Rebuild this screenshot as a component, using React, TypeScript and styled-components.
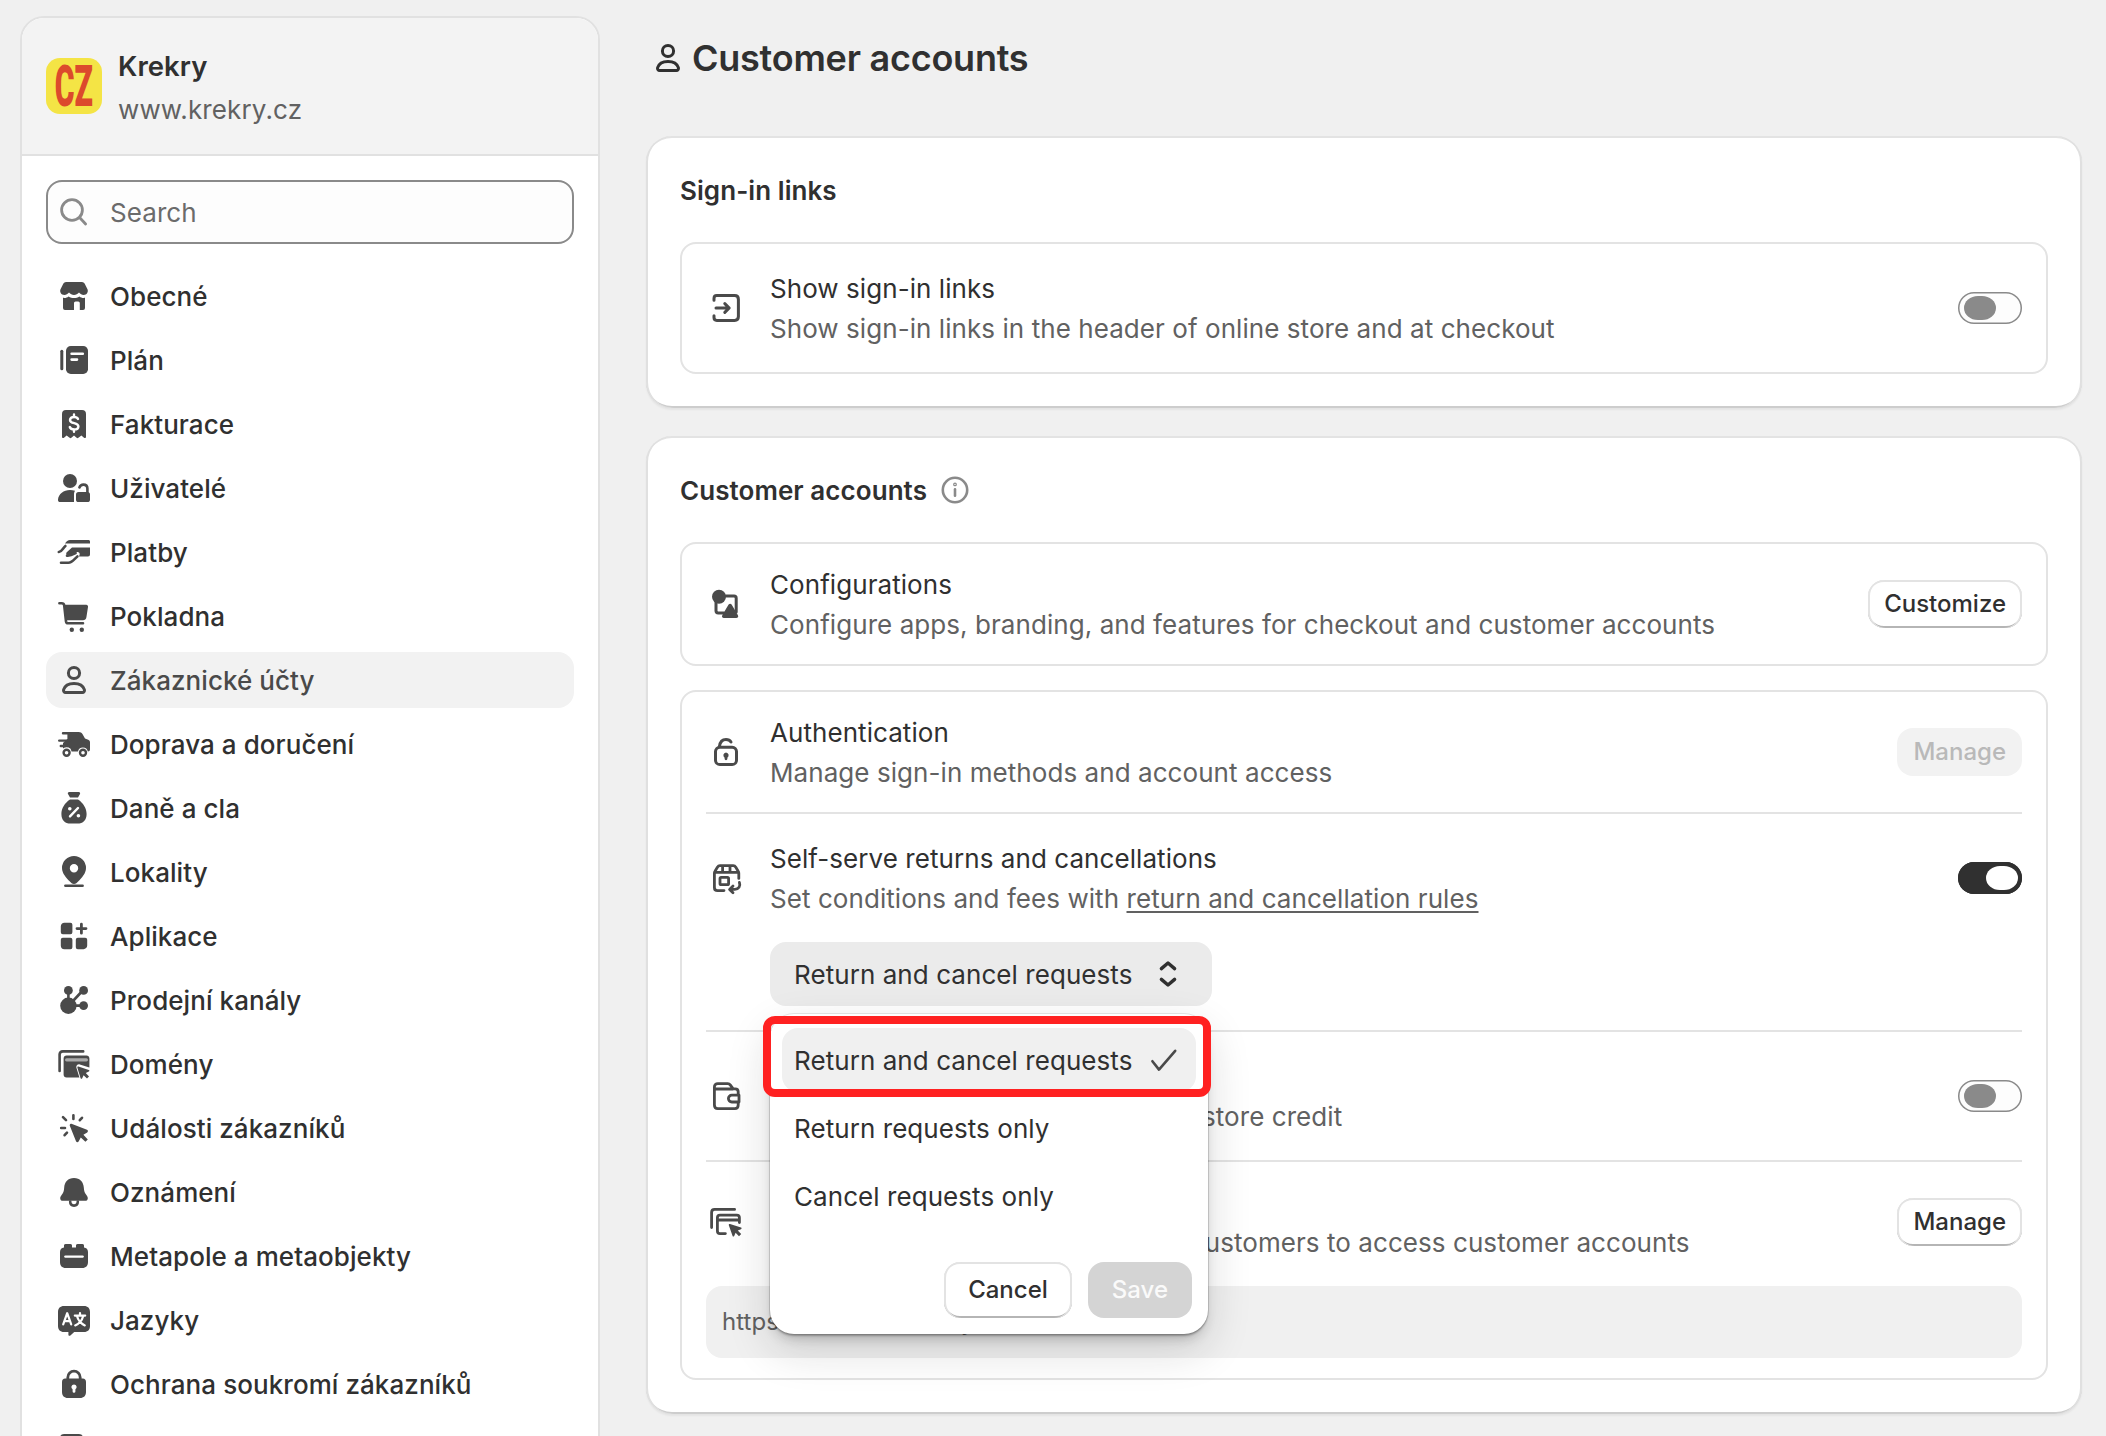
import React from "react";
import styled, { createGlobalStyle, css } from "styled-components";

const GlobalStyle = createGlobalStyle`
  *, *::before, *::after { box-sizing: border-box; }
  body {
    margin: 0;
    background: #f0f0f0;
    color: #303030;
    font-family: Inter, "Liberation Sans", sans-serif;
    font-size: 26px;
    line-height: 40px;
    letter-spacing: 0.064px;
    -webkit-font-smoothing: antialiased;
  }
  button, input { font: inherit; color: inherit; letter-spacing: inherit; }
`;

/* ---------- icons ---------- */

const Svg = styled.svg`
  width: 40px;
  height: 40px;
  flex: none;
  display: block;
  color: #4a4a4a;
  fill: currentColor;
`;

const line = {
  fill: "none",
  stroke: "currentColor",
  strokeWidth: 1.5,
  strokeLinecap: "round" as const,
  strokeLinejoin: "round" as const,
};
const knock = { ...line, stroke: "#fff", strokeWidth: 1.2 };

const icons: Record<string, React.ReactNode> = {
  search: (
    <g {...line} strokeWidth={1.4}>
      <circle cx="9" cy="9" r="5.2" />
      <path d="M12.9 12.9 15.800 16" />
    </g>
  ),
  store: (
    <>
      <path d="M6 3h8a1.500 1.500 0 0 1 1.300.8l1.500 3c.4 1.300-.4 2.700-2 2.700-.9 0-1.600-.4-2.300-1.200-.7.8-1.500 1.200-2.500 1.200s-1.800-.4-2.500-1.200c-.7.8-1.400 1.200-2.300 1.200-1.600 0-2.400-1.400-2-2.700l1.500-3A1.500 1.500 0 0 1 6 3Z" />
      <path d="M4.500 10.900c1.100.2 2-.1 2.800-.7 1.600 1.100 3.800 1.100 5.400 0 .8.6 1.700.9 2.800.7V16a1 1 0 0 1-1 1H12.900v-3.500a.8.800 0 0 0-.8-.8h-1.300a.8.800 0 0 0-.8.8V17H5.500a1 1 0 0 1-1-1Z" />
    </>
  ),
  plan: (
    <>
      <path d="M3.900 5.600v8.800" {...line} />
      <rect x="6" y="3" width="11" height="14" rx="2.4" />
      <path d="M8.800 6.900h5.600M8.800 9.800h2.700" {...knock} strokeWidth={1.3} />
    </>
  ),
  bill: (
    <>
      <path d="M6 3h8a2 2 0 0 1 2 2v11.500c0 .5-.6.700-1 .4l-1.300-1.200-1.500 1.200a.7.700 0 0 1-.9 0L10 15.800l-1.300 1.100a.7.700 0 0 1-.9 0l-1.500-1.200L5 16.900c-.4.300-1 .1-1-.4V5a2 2 0 0 1 2-2Z" />
      <path d="M12 7.500c-.3-.7-1-1-2-1-1.200 0-2 .6-2 1.500 0 2.200 4.200 1 4.200 3.200 0 .9-.9 1.500-2.100 1.500-1.100 0-1.900-.4-2.200-1.200M10 5.200v1.300M10 12.700v1.200" {...knock} />
    </>
  ),
  userLock: (
    <>
      <circle cx="8" cy="6.500" r="3.500" />
      <path d="M8 11c.9 0 1.700.1 2.500.4-.3.500-.5 1-.5 1.600V17H3.200A1.200 1.200 0 0 1 2 15.700C2.300 13 4.800 11 8 11Z" />
      <rect x="11" y="12" width="7" height="5" rx="1.300" />
      <path d="M12.700 9.700c.4-1 1.100-1.400 2-1.400 1.200 0 2 .8 2 2v2" {...line} strokeWidth={1.300} />
    </>
  ),
  pay: (
    <>
      <path d="M8 4h9.200c.5 0 .8.300.8.800v.9H5.500C6.200 4.800 7 4 8 4Z" />
      <path d="M9 7.800h9v3.400a1 1 0 0 1-1 1h-4.500l.3-.8c.3-1-.7-1.700-1.600-1.300L8.500 11.300C6.500 12 5.500 11 6.500 10Z" />
      <path d="M2.400 10c1.700-.2 2-2 3.300-3M6.500 11.800c1.300.2 2.700-.4 4.300-1.200M3.500 15.400h3.700c1.800 0 3-1.900 4.500-3.200" {...line} strokeWidth={1.300} />
    </>
  ),
  cart: (
    <>
      <path d="M2.700 3.600h1.100c.8 0 1.200.400 1.300 1.100l.9 8c.1.500.4.900 1 .9h7.500" {...line} strokeWidth={1.300} />
      <path d="M5 4.400h11.100c.6 0 1 .5.900 1.100l-.8 5.100c-.1.900-.8 1.500-1.700 1.500H6Z" />
      <circle cx="8.900" cy="16.900" r="1.100" />
      <circle cx="13.900" cy="16.900" r="1.100" />
    </>
  ),
  person: (
    <g {...line}>
      <circle cx="10" cy="6.500" r="2.800" />
      <path d="M10 11.700c2.600 0 4.600 1.200 5.200 3.100.2.700-.3 1.400-1 1.400H5.800c-.7 0-1.200-.7-1-1.400.6-1.900 2.600-3.100 5.200-3.100Z" />
    </g>
  ),
  truck: (
    <>
      <path d="M6.700 4h5.700c.8 0 1.500.4 1.900 1.100l1.200 2.200 1.600.6c.6.200.9.700.9 1.300v3.500c0 .6-.4 1-1 1h-.1a2.500 2.500 0 0 0-4.900 0H8.800a2.500 2.500 0 0 0-4.300-1.400V9.500L6.700 7.500Z" />
      <path d="M4.500 4.600H8M2.600 8.300H8M3.400 11H7" {...line} strokeWidth={1.200} />
      <circle cx="6.300" cy="14.400" r="1.500" {...line} strokeWidth={1.200} />
      <circle cx="14.500" cy="14.400" r="1.500" {...line} strokeWidth={1.200} />
    </>
  ),
  tax: (
    <>
      <path d="M7.600 2h4.800c.6 0 .8.500.6 1l-1 1.800H8L7 3c-.3-.5 0-1 .6-1Z" />
      <path d="M8 5.700h4c2.600 1.700 4.300 4.400 4.300 7.300 0 3-1.700 4.800-4.600 4.800H8.300c-2.900 0-4.600-1.800-4.600-4.800 0-2.900 1.700-5.600 4.300-7.300Z" />
      <path d="m8 14.200 4-4.200" {...knock} />
      <circle cx="7.900" cy="10.400" r=".9" fill="#fff" />
      <circle cx="12.200" cy="13.900" r=".9" fill="#fff" />
    </>
  ),
  pin: (
    <>
      <path fillRule="evenodd" d="M10 2a6 6 0 0 1 6 6c0 2.700-2.100 4.900-3.800 6.600-.7.700-1.300 1.400-2.200 1.400s-1.500-.7-2.200-1.400C6.100 12.900 4 10.700 4 8a6 6 0 0 1 6-6Zm0 8.200A2.100 2.100 0 1 0 10 6a2.100 2.100 0 0 0 0 4.200Z" />
      <path d="M5.700 16.900h8.600" {...line} strokeWidth={1.300} />
    </>
  ),
  apps: (
    <>
      <path d="M5.200 3.400h3a1 1 0 0 1 1 1v3.700a1 1 0 0 1-1 1H4.400a1 1 0 0 1-1-1V5.200c0-1 .8-1.800 1.800-1.800Z" />
      <path d="M4.400 10.900h3.800a1 1 0 0 1 1 1v3.700a1 1 0 0 1-1 1h-3a1.800 1.800 0 0 1-1.800-1.800v-2.900a1 1 0 0 1 1-1Z" />
      <path d="M11.900 10.900h3.700a1 1 0 0 1 1 1v2.900c0 1-.8 1.800-1.800 1.800h-2.900a1 1 0 0 1-1-1v-3.700a1 1 0 0 1 1-1Z" />
      <path d="M13.700 4.100v4.500M11.500 6.300H16" {...line} strokeWidth={1.400} />
    </>
  ),
  channels: (
    <>
      <path d="M7.200 5v8l7.400-8M7.200 12.800h7.400" {...line} strokeWidth={1.300} />
      <circle cx="7.200" cy="12.900" r="4.100" />
      <circle cx="7.200" cy="5.200" r="2.200" />
      <circle cx="14.800" cy="5.200" r="2.200" />
      <circle cx="14.800" cy="12.800" r="2.200" />
    </>
  ),
  domains: (
    <>
      <path d="M2.800 13.500V5.300c0-1 .6-1.600 1.600-1.600h10.200" {...line} strokeWidth={1.300} />
      <path fillRule="evenodd" d="M6.300 5.700h9.900c.9 0 1.500.6 1.500 1.500v4.600l-4.800-1.600c-1-.3-2 .6-1.700 1.700l1.500 4.800H6.300c-.9 0-1.500-.6-1.500-1.500v-8c0-.9.6-1.500 1.500-1.500Z" />
      <path d="M6.300 7.900h9.900" {...knock} stroke="#aaa" strokeWidth={1.600} />
      <path d="m12.200 11.300 5.200 1.700c.4.100.4.600 0 .8l-1.500.7 1.600 1.700-1 1-1.700-1.600-.7 1.500c-.1.400-.6.300-.8 0l-1.600-5.200c-.1-.4.200-.7.500-.6Z" />
    </>
  ),
  click: (
    <>
      <path d="m8.700 7.900 7.800 3c.6.200.6 1 .1 1.300L14.700 13.400l2.200 2.300-1.200 1.200-2.300-2.200-1.100 2c-.3.500-1 .500-1.300-.1l-3.100-7.700c-.2-.6.300-1.200.7-1Z" />
      <path d="M9.700 3.600v1.900M4.500 4.600l1.500 1.500M14 4.900l-1.100 1.200M3.600 10h1.900M6.500 12.300l-1.200 1.300" {...line} strokeWidth={1.300} />
    </>
  ),
  bell: (
    <>
      <path d="M10 3c3 0 4.700 2 4.900 4.700.1 1.900.5 2.800 1.300 3.800.5.700.7 1 .7 1.600 0 .8-.5 1.300-1.400 1.300h-11c-.9 0-1.400-.5-1.400-1.300 0-.6.200-.9.700-1.600.8-1 1.200-1.900 1.300-3.800C5.300 5 7 3 10 3Z" />
      <path d="M8.100 14.800c0 1.200.8 2 1.900 2s1.900-.8 1.900-2" {...line} strokeWidth={1.300} />
    </>
  ),
  meta: (
    <>
      <path d="M5.800 4h2.400c.6 0 .8.400.8.900v.9h2v-.9c0-.5.200-.9.800-.9h2.400c.6 0 .8.400.8.900v.9c1.200.100 2 .9 2 2.200V13c0 1.900-1 3-2.900 3H5.900C4 16 3 14.900 3 13V8c0-1.300.8-2.100 2-2.200v-.9c0-.5.200-.9.800-.9Z" />
      <path d="M5.700 10.300h8.600" {...knock} />
    </>
  ),
  lang: (
    <>
      <path d="M5 3h10c1.900 0 3 1.100 3 3v7c0 1.900-1.100 3-3 3h-4.900L8.200 17.700c-.5.400-1 .2-1-.4V16H5c-1.900 0-3-1.100-3-3V6c0-1.900 1.100-3 3-3Z" />
      <path d="m4.600 12.200 2-5.600 2 5.600M5.400 10.600h2.500M10.400 7.800h5.200M13 6.500v1.300M14.600 8c-.5 2-2 3.800-4 4.700M11.500 8c.5 2 2 3.800 3.900 4.700" {...knock} strokeWidth={1.1} />
    </>
  ),
  lock: (
    <>
      <path fillRule="evenodd" d="M5.600 7.300h8.800c1 0 1.600.7 1.600 1.700v5c0 1.900-1.100 3-3 3H7c-1.900 0-3-1.100-3-3V9c0-1 .6-1.700 1.600-1.700ZM10 10.200a1.300 1.300 0 0 0-.7 2.400v1.100a.7.700 0 0 0 1.400 0v-1.100a1.300 1.300 0 0 0-.7-2.400Z" />
      <path d="M6.900 7.500V6.700a3.100 3.100 0 0 1 6.200 0v.8" {...line} strokeWidth={1.400} />
    </>
  ),
  policy: <rect x="3" y="3" width="11.500" height="14" rx="2" />,
  signIn: (
    <>
      <path d="M4 6.100V5.200c0-.8.500-1.400 1.400-1.400h8.900c1.200 0 1.900.8 1.900 1.900v8.600c0 1.200-.7 1.900-1.900 1.900H5.400c-.9 0-1.400-.6-1.400-1.400v-.9" {...line} />
      <path d="M5 10h6.300M9.400 7.800 11.600 10l-2.200 2.200" {...line} />
    </>
  ),
  brand: (
    <>
      <path d="M5 9v4.400c0 .7.400 1.100 1.100 1.100H9M10 6h4c.7 0 1.100.4 1.100 1.100V14" {...line} strokeWidth={1.500} />
      <circle cx="6.500" cy="6.400" r="3.500" />
      <path d="m12.800 10.300 3.100 5.200c.5.800.1 1.500-.8 1.500H9c-.9 0-1.300-.7-.8-1.500l3.100-5.200c.4-.6 1.100-.6 1.500 0Z" />
    </>
  ),
  unlock: (
    <>
      <rect x="4.750" y="7.600" width="10.500" height="8.700" rx="2.200" {...line} />
      <path d="M6.700 7.300c.3-2.200 1.500-3.500 3.300-3.500 1.100 0 2 .4 2.500 1.200" {...line} />
      <path d="M10 10.200a1.500 1.500 0 0 0-.7 2.700v.5a.7.700 0 0 0 1.400 0v-.5a1.500 1.500 0 0 0-.7-2.700Z" />
    </>
  ),
  returns: (
    <>
      <path d="M9 16.300H5.800c-1 0-1.600-.6-1.600-1.600V7.600c0-.4.100-.7.300-1l1.200-2c.3-.5.700-.8 1.300-.8h6.600c.6 0 1 .3 1.300.8l1.200 2c.2.300.3.600.3 1v2.600M4.500 7.200h11.400M8.300 4v3M12 4v3" {...line} strokeWidth={1.400} />
      <rect x="7" y="9.700" width="4.300" height="3.600" rx=".6" {...line} strokeWidth={1.400} />
      <path d="M16.700 12.200c.7 1.900-.4 3.500-2.300 3.500h-2.200M13.500 14l-1.700 1.700 1.700 1.700" {...line} strokeWidth={1.400} />
    </>
  ),
  wallet: (
    <>
      <path d="M4.200 5.500c0-1 .7-1.700 1.700-1.700h5c.5 0 .9.200 1.200.6l1.500 2h1c.9 0 1.500.6 1.500 1.500v6.600c0 1.100-.6 1.800-1.700 1.800H5.900c-1.100 0-1.700-.7-1.700-1.800ZM4.500 6.500h9" {...line} strokeWidth={1.400} />
      <path d="M16.500 9.600h-3.600a1.700 1.700 0 0 0 0 3.400h3.600Z" fill="#fff" stroke="currentColor" strokeWidth={1.400} strokeLinejoin="round" />
    </>
  ),
  domainLine: (
    <>
      <path d="M2.800 12.800V5.200c0-1 .6-1.500 1.500-1.500h10M9.700 15.800H7c-.8 0-1.300-.5-1.300-1.300V7.900c0-.8.500-1.300 1.300-1.300h8.400c.8 0 1.300.5 1.300 1.300v2.400M6 9h10.400" {...line} strokeWidth={1.400} />
      <path d="m12 11 5.500 1.800c.4.100.4.600 0 .8l-1.600.7 1.700 1.700-1.100 1.100-1.700-1.700-.7 1.600c-.2.400-.7.300-.8 0L11.400 11.600c-.1-.4.200-.7.600-.6Z" />
    </>
  ),
  info: (
    <g {...line} strokeWidth={1.300}>
      <circle cx="10" cy="10" r="6.100" />
      <path d="M10 9.700v3.200" />
      <circle cx="10" cy="7.200" r=".3" />
    </g>
  ),
  check: <path d="M4.200 10.600 7.500 14.800 15.600 5.400" {...line} strokeWidth={1.300} />,
  updown: <path d="M6.700 7.300 10 4.500l3.300 2.800M6.700 12.700l3.300 2.800 3.300-2.800" {...line} strokeWidth={1.700} />,
};

const Icon = ({ name, className }: { name: string; className?: string }) => (
  <Svg viewBox="0 0 20 20" className={className} aria-hidden>
    {icons[name]}
  </Svg>
);

const MutedIcon = styled(Icon)`
  color: #8a8a8a;
`;
const DarkIcon = styled(Icon)`
  color: #303030;
`;

/* optical centring of a label beside its icon */
const Label = styled.span`
  padding-top: 2px;
`;

/* ---------- sidebar ---------- */

const Page = styled.div`
  display: flex;
  align-items: flex-start;
  gap: 46px;
  width: 2106px;
  height: 1436px;
  overflow: hidden;
  padding: 16px 24px 0 20px;
`;

const Sidebar = styled.aside`
  flex: none;
  width: 580px;
  height: 1500px;
  background: #fff;
  border: 2px solid #e1e1e1;
  border-radius: 24px;
  overflow: hidden;
`;

const ShopHeader = styled.header`
  display: flex;
  align-items: center;
  gap: 16px;
  height: 138px;
  padding: 0 24px;
  background: #f3f3f3;
  border-bottom: 2px solid #e1e1e1;
`;

const Logo = styled.div`
  display: flex;
  align-items: center;
  justify-content: center;
  width: 56px;
  height: 56px;
  border-radius: 14px;
  background: #f4e445;
`;

const LogoText = styled.span`
  font-family: Roboto, "Liberation Sans", sans-serif;
  font-size: 58px;
  font-weight: 900;
  line-height: 56px;
  letter-spacing: 0;
  color: #dc4a2c;
  transform: scaleX(0.52);
`;

const ShopText = styled.div`
  padding-top: 4px;
`;

const ShopName = styled.div`
  font-size: 27.5px;
  font-weight: 600;
  line-height: 44px;
`;

const ShopUrl = styled.div`
  color: #616161;
  line-height: 44px;
  letter-spacing: 0.13px;
`;

const SearchBox = styled.label`
  display: flex;
  align-items: center;
  gap: 16px;
  height: 64px;
  margin: 24px 24px 0;
  padding: 0 6px;
  background: #fdfdfd;
  border: 2px solid #8a8a8a;
  border-radius: 16px;
`;

const SearchInput = styled.input`
  flex: 1;
  min-width: 0;
  padding: 1px 0 0;
  border: 0;
  outline: 0;
  background: none;
  &::placeholder {
    color: #6b6b6b;
    opacity: 1;
  }
`;

const Nav = styled.nav`
  display: flex;
  flex-direction: column;
  gap: 8px;
  padding: 24px 24px 0;
`;

const NavItem = styled.a<{ $active?: boolean }>`
  display: flex;
  align-items: center;
  gap: 16px;
  height: 56px;
  padding: 0 8px;
  border-radius: 16px;
  font-weight: 500;
  ${(p) => p.$active && css`
    background: #f2f2f2;
    color: #4a4a4a;
  `}
`;

const navItems: [string, string][] = [
  ["store", "Obecné"],
  ["plan", "Plán"],
  ["bill", "Fakturace"],
  ["userLock", "Uživatelé"],
  ["pay", "Platby"],
  ["cart", "Pokladna"],
  ["person", "Zákaznické účty"],
  ["truck", "Doprava a doručení"],
  ["tax", "Daně a cla"],
  ["pin", "Lokality"],
  ["apps", "Aplikace"],
  ["channels", "Prodejní kanály"],
  ["domains", "Domény"],
  ["click", "Události zákazníků"],
  ["bell", "Oznámení"],
  ["meta", "Metapole a metaobjekty"],
  ["lang", "Jazyky"],
  ["lock", "Ochrana soukromí zákazníků"],
  ["policy", "Zásady"],
];

/* ---------- main ---------- */

const Main = styled.main`
  flex: 1;
  display: flex;
  flex-direction: column;
  gap: 28px;
`;

const PageTitle = styled.h1`
  display: flex;
  align-items: center;
  gap: 4px;
  margin: 0 0 8px;
  padding: 0 2px;
  height: 84px;
  font-size: 36px;
  font-weight: 600;
  letter-spacing: -0.24px;
`;

const Card = styled.section`
  display: flex;
  flex-direction: column;
  gap: 24px;
  padding: 34px;
  background: #fff;
  border-radius: 26px;
  box-shadow:
    inset 2px 0 0 #e0e0e0,
    inset -2px 0 0 #e0e0e0,
    inset 0 -2px 0 #cdcdcd,
    inset 0 2px 0 #e3e3e3,
    0 2px 2px rgba(26, 26, 26, 0.05);
`;

const CardTitle = styled.h2`
  display: flex;
  align-items: center;
  gap: 8px;
  height: 40px;
  margin: 0 0 8px;
  font-size: 26px;
  font-weight: 600;
`;

const Group = styled.div`
  padding: 0 24px;
  border: 2px solid #e3e3e3;
  border-radius: 16px;
`;

const Block = styled.div<{ $pad: number; $divided?: boolean }>`
  display: flex;
  flex-direction: column;
  gap: 24px;
  padding: ${(p) => p.$pad}px 0;
  ${(p) => p.$divided && css`
    border-bottom: 2px solid #e3e3e3;
  `}
`;

const Row = styled.div`
  display: flex;
  align-items: center;
  gap: 24px;
  height: 80px;
`;

const RowText = styled.div`
  flex: 1;
  padding-top: 2px;
  white-space: nowrap;
`;

const RowDescription = styled.div`
  color: #616161;
`;

const TextLink = styled.a`
  text-decoration: underline;
  text-decoration-thickness: 2px;
  text-underline-offset: 3px;
`;

type Tone = "plain" | "disabled" | "primaryDisabled";

const Button = styled.button<{ $tone?: Tone; $large?: boolean }>`
  height: ${(p) => (p.$large ? 56 : 48)}px;
  padding: 0 ${(p) => (p.$large ? 24 : 16)}px;
  border: 0;
  border-radius: 16px;
  background: #fff;
  font-size: 24px;
  font-weight: 550;
  line-height: 32px;
  letter-spacing: 0;
  box-shadow:
    inset 2px 0 0 #e3e3e3,
    inset -2px 0 0 #e3e3e3,
    inset 0 -2px 0 #b5b5b5,
    inset 0 2px 0 #e3e3e3;
  ${(p) => p.$tone === "disabled" && css`
    background: #f2f2f2;
    color: #b9b9b9;
    box-shadow: none;
  `}
  ${(p) => p.$tone === "primaryDisabled" && css`
    background: #d4d4d4;
    color: #fafafa;
    box-shadow: none;
  `}
`;

const Switch = styled.span<{ $on?: boolean }>`
  display: flex;
  align-items: center;
  justify-content: ${(p) => (p.$on ? "flex-end" : "flex-start")};
  width: 64px;
  height: 32px;
  padding: 0 4px 0 6px;
  border-radius: 16px;
  background: ${(p) => (p.$on ? "#303030" : "#fdfdfd")};
  box-shadow: inset 0 0 0 1.5px ${(p) => (p.$on ? "#303030" : "#8a8a8a")};
`;

const Thumb = styled.span<{ $on?: boolean }>`
  width: 32px;
  height: 24px;
  border-radius: 14px / 12px;
  background: ${(p) => (p.$on ? "#fff" : "#8a8a8a")};
`;

const Toggle = ({ on }: { on?: boolean }) => (
  <Switch $on={on}>
    <Thumb $on={on} />
  </Switch>
);

/* ---------- select and its popover ---------- */

const SelectWrap = styled.div`
  position: relative;
  width: 442px;
  margin-left: 64px;
`;

const SelectButton = styled.div`
  display: flex;
  align-items: center;
  justify-content: space-between;
  height: 64px;
  padding: 0 24px;
  border-radius: 16px;
  background: #ebebeb;
  white-space: nowrap;
`;

const Popover = styled.div`
  position: absolute;
  z-index: 2;
  top: 72px;
  left: 0;
  width: 438px;
  height: 320px;
  display: flex;
  flex-direction: column;
  justify-content: space-between;
  padding: 14px 12px 16px;
  border-radius: 24px;
  background: #fff;
  box-shadow:
    0 0 0 1px rgba(0, 0, 0, 0.09),
    0 2px 2px rgba(0, 0, 0, 0.25),
    0 8px 12px -4px rgba(26, 26, 26, 0.22),
    0 16px 44px 0 rgba(26, 26, 26, 0.16);
`;

const Options = styled.div`
  display: flex;
  flex-direction: column;
  gap: 4px;
`;

const Option = styled.div<{ $selected?: boolean }>`
  display: flex;
  align-items: center;
  justify-content: space-between;
  height: 64px;
  padding: 0 12px;
  border-radius: 16px;
  white-space: nowrap;
  background: ${(p) => (p.$selected ? "#f0f0f0" : "transparent")};
`;

const Highlight = styled.div`
  position: absolute;
  top: 2px;
  left: -7px;
  width: 448px;
  height: 81px;
  border: 8px solid #ff2121;
  border-radius: 12px;
`;

const Actions = styled.div`
  display: flex;
  justify-content: flex-end;
  gap: 16px;
  padding-right: 4px;
`;

const UrlBar = styled.div`
  display: flex;
  align-items: center;
  height: 72px;
  padding: 0 16px;
  border-radius: 16px;
  background: #f0f0f0;
  color: #616161;
  font-size: 24px;
`;

export default function App() {
  return (
    <>
      <GlobalStyle />
      <Page>
        <Sidebar>
          <ShopHeader>
            <Logo>
              <LogoText>CZ</LogoText>
            </Logo>
            <ShopText>
              <ShopName>Krekry</ShopName>
              <ShopUrl>www.krekry.cz</ShopUrl>
            </ShopText>
          </ShopHeader>
          <SearchBox>
            <MutedIcon name="search" />
            <SearchInput placeholder="Search" />
          </SearchBox>
          <Nav>
            {navItems.map(([icon, label]) => (
              <NavItem key={icon} $active={icon === "person"}>
                <Icon name={icon} />
                <Label>{label}</Label>
              </NavItem>
            ))}
          </Nav>
        </Sidebar>

        <Main>
          <PageTitle>
            <DarkIcon name="person" />
            Customer accounts
          </PageTitle>

          <Card>
            <CardTitle>
              <Label>Sign-in links</Label>
            </CardTitle>
            <Group>
              <Block $pad={24}>
                <Row>
                  <Icon name="signIn" />
                  <RowText>
                    <div>Show sign-in links</div>
                    <RowDescription>Show sign-in links in the header of online store and at checkout</RowDescription>
                  </RowText>
                  <Toggle />
                </Row>
              </Block>
            </Group>
          </Card>

          <Card>
            <CardTitle>
              <Label>Customer accounts</Label>
              <MutedIcon name="info" />
            </CardTitle>
            <Group>
              <Block $pad={20}>
                <Row>
                  <Icon name="brand" />
                  <RowText>
                    <div>Configurations</div>
                    <RowDescription>Configure apps, branding, and features for checkout and customer accounts</RowDescription>
                  </RowText>
                  <Button>Customize</Button>
                </Row>
              </Block>
            </Group>
            <Group>
              <Block $pad={20} $divided>
                <Row>
                  <Icon name="unlock" />
                  <RowText>
                    <div>Authentication</div>
                    <RowDescription>Manage sign-in methods and account access</RowDescription>
                  </RowText>
                  <Button $tone="disabled">Manage</Button>
                </Row>
              </Block>
              <Block $pad={24} $divided>
                <Row>
                  <Icon name="returns" />
                  <RowText>
                    <div>Self-serve returns and cancellations</div>
                    <RowDescription>
                      Set conditions and fees with <TextLink>return and cancellation rules</TextLink>
                    </RowDescription>
                  </RowText>
                  <Toggle on />
                </Row>
                <SelectWrap>
                  <SelectButton>
                    <Label>Return and cancel requests</Label>
                    <DarkIcon name="updown" />
                  </SelectButton>
                  <Popover>
                    <Options>
                      <Option $selected>
                        <Label>Return and cancel requests</Label>
                        <Icon name="check" />
                      </Option>
                      <Option>
                        <Label>Return requests only</Label>
                      </Option>
                      <Option>
                        <Label>Cancel requests only</Label>
                      </Option>
                    </Options>
                    <Actions>
                      <Button $large>Cancel</Button>
                      <Button $large $tone="primaryDisabled">Save</Button>
                    </Actions>
                    <Highlight />
                  </Popover>
                </SelectWrap>
              </Block>
              <Block $pad={24} $divided>
                <Row>
                  <Icon name="wallet" />
                  <RowText>
                    <div>Store credit</div>
                    <RowDescription>Allow customers to see and spend store credit</RowDescription>
                  </RowText>
                  <Toggle />
                </Row>
              </Block>
              <Block $pad={20}>
                <Row>
                  <Icon name="domainLine" />
                  <RowText>
                    <div>URL</div>
                    <RowDescription>Share this URL anywhere to allow customers to access customer accounts</RowDescription>
                  </RowText>
                  <Button>Manage</Button>
                </Row>
                <UrlBar>https://account.krekry.cz</UrlBar>
              </Block>
            </Group>
          </Card>
        </Main>
      </Page>
    </>
  );
}
